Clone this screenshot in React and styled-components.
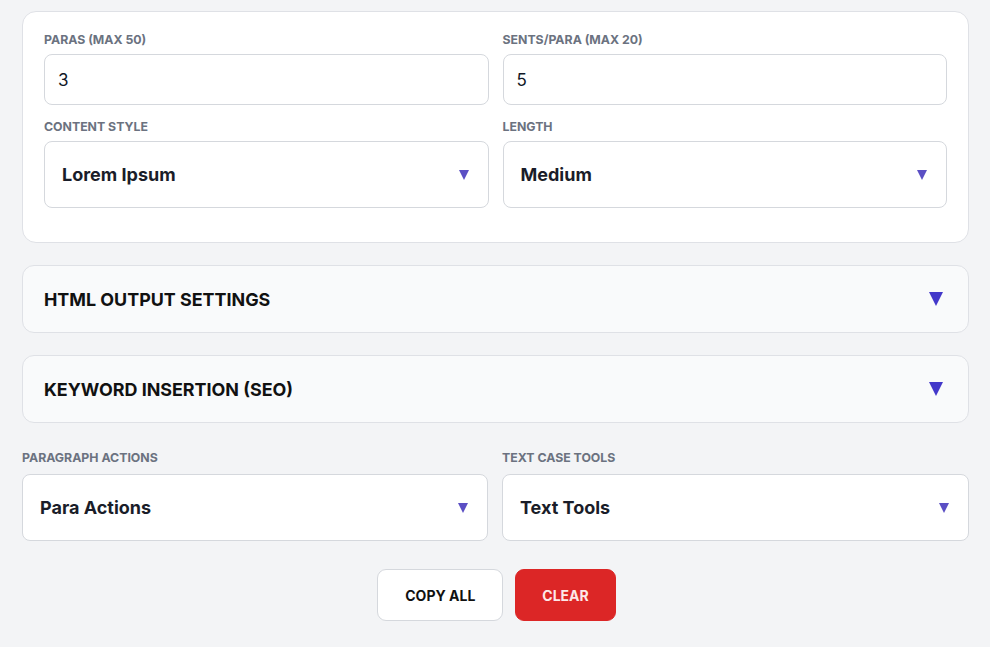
import React from "react";
import styled, { createGlobalStyle } from "styled-components";

const Global = createGlobalStyle`
  *, *::before, *::after { box-sizing: border-box; }
  body {
    margin: 0;
    background: #f3f4f6;
    font-family: Inter, Roboto, "Liberation Sans", sans-serif;
    color: #111827;
  }
`;

const Page = styled.div`
  padding: 11px 21px 25px 22px;
  display: flex;
  flex-direction: column;
`;

const Card = styled.div`
  background: #ffffff;
  border: 1px solid #dfe1e6;
  border-radius: 14px;
  padding: 21px 21px 34px 21px;
  display: grid;
  grid-template-columns: 1fr 1fr;
  column-gap: 14px;
  row-gap: 15px;
`;

const Field = styled.div`
  display: flex;
  flex-direction: column;
`;

const Label = styled.label`
  font-size: 12.3px;
  font-weight: 700;
  color: #6b7280;
  text-transform: uppercase;
  line-height: 14px;
  margin-bottom: ${(p) => p.$gap || 7}px;
`;

const Input = styled.div`
  height: 51px;
  border: 1px solid #d5d8dd;
  border-radius: 8px;
  background: #fff;
  display: flex;
  align-items: center;
  padding: 0 13px;
  font-size: 17px;
  color: #111827;
`;

const Select = styled.div`
  height: 67px;
  border: 1px solid #d5d8dd;
  border-radius: 8px;
  background: #fff;
  display: flex;
  align-items: center;
  justify-content: space-between;
  padding: 0 19px 0 17px;
  font-size: 18px;
  font-weight: 700;
  color: #1a1d29;
`;

const Caret = styled.span`
  width: 0;
  height: 0;
  border-left: ${(p) => p.$size / 2}px solid transparent;
  border-right: ${(p) => p.$size / 2}px solid transparent;
  border-top: ${(p) => p.$size}px solid ${(p) => p.$color};
`;

const Accordion = styled.div`
  margin-top: 22px;
  height: 68px;
  border: 1px solid #dfe1e6;
  border-radius: 12px;
  background: #f9fafb;
  display: flex;
  align-items: center;
  justify-content: space-between;
  padding: 0 25px 0 21px;
  font-size: 17.9px;
  font-weight: 700;
  color: #111;
`;

const ActionRow = styled.div`
  margin-top: 28px;
  display: grid;
  grid-template-columns: 466px 1fr;
  column-gap: 14px;
`;

const Buttons = styled.div`
  margin-top: 28px;
  display: flex;
  justify-content: center;
  gap: 12px;
  padding-left: 2px;
`;

const Button = styled.button`
  height: 52px;
  padding: 0 ${(p) => p.$px}px;
  border-radius: 9px;
  font-family: Inter, Roboto, "Liberation Sans", sans-serif;
  font-size: 14px;
  font-weight: 700;
  border: 1px solid ${(p) => (p.$danger ? "#dc2626" : "#d5d8dd")};
  background: ${(p) => (p.$danger ? "#dc2626" : "#fff")};
  color: ${(p) => (p.$danger ? "#fde8e8" : "#111")};
`;

export default function App() {
  return (
    <>
      <Global />
      <Page>
        <Card>
          <Field>
            <Label>Paras (max 50)</Label>
            <Input>3</Input>
          </Field>
          <Field>
            <Label>Sents/Para (max 20)</Label>
            <Input>5</Input>
          </Field>
          <Field>
            <Label>Content Style</Label>
            <Select>
              Lorem Ipsum
              <Caret $size={10} $color="#5b4fc4" />
            </Select>
          </Field>
          <Field>
            <Label>Length</Label>
            <Select>
              Medium
              <Caret $size={10} $color="#5b4fc4" />
            </Select>
          </Field>
        </Card>

        <Accordion>
          HTML OUTPUT SETTINGS
          <Caret $size={14} $color="#4338ca" />
        </Accordion>
        <Accordion>
          KEYWORD INSERTION (SEO)
          <Caret $size={14} $color="#4338ca" />
        </Accordion>

        <ActionRow>
          <Field>
            <Label $gap={9}>Paragraph Actions</Label>
            <Select>
              Para Actions
              <Caret $size={10} $color="#5b4fc4" />
            </Select>
          </Field>
          <Field>
            <Label $gap={9}>Text Case Tools</Label>
            <Select>
              Text Tools
              <Caret $size={10} $color="#5b4fc4" />
            </Select>
          </Field>
        </ActionRow>

        <Buttons>
          <Button $px={27}>COPY ALL</Button>
          <Button $px={26} $danger>CLEAR</Button>
        </Buttons>
      </Page>
    </>
  );
}
